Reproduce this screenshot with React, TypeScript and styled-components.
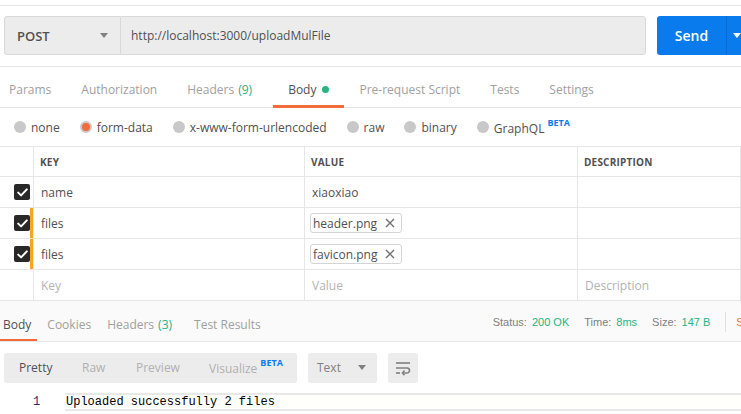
import React from "react";
import styled, { createGlobalStyle } from "styled-components";

const Global = createGlobalStyle`
  html, body { margin: 0; padding: 0; background: #ffffff; }
  body { font-family: "Open Sans", "DejaVu Sans", sans-serif; color: #505050; width: 741px; height: 414px; overflow: hidden; }
  * { box-sizing: border-box; }
`;

const Page = styled.div`
  width: 741px;
  height: 414px;
  overflow: hidden;
  display: flex;
  flex-direction: column;
`;

const TopStrip = styled.div`
  height: 6px;
  border-bottom: 1px solid #e6e6e6;
  flex-shrink: 0;
`;

const UrlRow = styled.div`
  display: flex;
  align-items: stretch;
  padding: 10px 0 11px 4px;
  border-bottom: 1px solid #e6e6e6;
  height: 61px;
  flex-shrink: 0;
`;

const MethodSelect = styled.div`
  width: 116px;
  background: #ececec;
  border: 1px solid #d9d9d9;
  border-right: none;
  border-radius: 3px 0 0 3px;
  display: flex;
  align-items: center;
  justify-content: space-between;
  padding: 0 12px 0 12px;
  font-size: 13px;
  font-weight: 600;
  color: #505050;
`;

const Caret = styled.span<{ $color?: string }>`
  width: 0;
  height: 0;
  border-left: 4px solid transparent;
  border-right: 4px solid transparent;
  border-top: 5px solid ${(p) => p.$color || "#808080"};
`;

const UrlInput = styled.div`
  width: 526px;
  background: #ececec;
  border: 1px solid #d9d9d9;
  border-radius: 0 3px 3px 0;
  display: flex;
  align-items: center;
  padding-left: 10px;
  font-size: 12px;
  color: #505050;
`;

const SendButton = styled.div`
  margin-left: 11px;
  flex: 1;
  display: flex;
  background: #097bed;
  border-radius: 3px 0 0 3px;
  color: #ffffff;
  overflow: hidden;
`;

const SendLabel = styled.div`
  width: 70px;
  display: flex;
  align-items: center;
  justify-content: center;
  font-size: 14px;
  font-weight: 600;
  border-right: 1px solid #0a6bd0;
`;

const SendArrow = styled.div`
  flex: 1;
  display: flex;
  align-items: center;
  padding-left: 6px;
`;

const TabBar = styled.div`
  display: flex;
  height: 41px;
  border-bottom: 1px solid #e6e6e6;
  flex-shrink: 0;
  margin-left: -6px;
`;

const Tab = styled.div<{ $active?: boolean }>`
  position: relative;
  display: flex;
  align-items: center;
  padding: 4px 15px 0;
  font-size: 12px;
  color: ${(p) => (p.$active ? "#505050" : "#a0a0a0")};
  white-space: nowrap;
  &::after {
    content: "";
    position: absolute;
    left: 0;
    right: 0;
    bottom: -1px;
    height: 3px;
    background: ${(p) => (p.$active ? "#f26b3a" : "transparent")};
  }
`;

const Count = styled.span`
  color: #26b47f;
  margin-left: 4px;
  margin-right: 6px;
`;

const Dot = styled.span`
  width: 7px;
  height: 7px;
  border-radius: 50%;
  background: #26b47f;
  margin-left: 6px;
`;

const RadioRow = styled.div`
  display: flex;
  align-items: center;
  height: 39px;
  padding-left: 14px;
  gap: 20px;
  border-bottom: 1px solid #e6e6e6;
  flex-shrink: 0;
`;

const RadioItem = styled.div`
  display: flex;
  align-items: center;
  gap: 5px;
  font-size: 12px;
  color: #505050;
`;

const RadioCircle = styled.span<{ $checked?: boolean }>`
  width: 12px;
  height: 12px;
  border-radius: 50%;
  background: ${(p) => (p.$checked ? "#f26b3a" : "#c8c8c8")};
  border: ${(p) => (p.$checked ? "2px solid #c8c8c8" : "none")};
`;

const Beta = styled.sup`
  font-size: 9px;
  font-weight: 700;
  color: #097bed;
  margin-left: 3px;
  position: relative;
  top: -2px;
`;

const Table = styled.div`
  display: grid;
  grid-template-columns: 34px 271px 273px 1fr;
  flex-shrink: 0;
`;

const Cell = styled.div<{ $head?: boolean; $placeholder?: boolean }>`
  height: ${(p) => (p.$head ? "30px" : "31px")};
  border-bottom: 1px solid #e6e6e6;
  border-right: 1px solid #e6e6e6;
  display: flex;
  align-items: center;
  padding-left: ${(p) => (p.$head ? "6px" : "7px")};
  font-size: ${(p) => (p.$head ? "10px" : "12px")};
  font-weight: ${(p) => (p.$head ? 700 : 400)};
  color: ${(p) => (p.$placeholder ? "#b3b3b3" : "#505050")};
  letter-spacing: ${(p) => (p.$head ? "0.2px" : "0")};
`;

const CheckCell = styled.div<{ $file?: boolean }>`
  height: 31px;
  border-bottom: 1px solid #e6e6e6;
  border-right: 1px solid #e6e6e6;
  display: flex;
  align-items: center;
  padding-left: 14px;
  position: relative;
  &::after {
    content: "";
    display: ${(p) => (p.$file ? "block" : "none")};
    position: absolute;
    right: 0;
    top: 0;
    bottom: 0;
    width: 3px;
    background: #f5a623;
  }
`;

const HeadCheckCell = styled(CheckCell)`
  height: 30px;
`;

const CheckBox = styled.span`
  width: 16px;
  height: 16px;
  border-radius: 2px;
  background: #282828;
  display: flex;
  align-items: center;
  justify-content: center;
`;

const FileChip = styled.div`
  display: flex;
  align-items: center;
  height: 20px;
  border: 1px solid #d4d4d4;
  border-radius: 3px;
  padding: 0 6px 0 2px;
  margin-left: -2px;
  gap: 8px;
  font-size: 12px;
  color: #505050;
  background: #fff;
`;

const ResponseBar = styled.div`
  display: flex;
  align-items: stretch;
  height: 41px;
  background: #fafafa;
  border-bottom: 1px solid #e6e6e6;
  flex-shrink: 0;
  overflow: hidden;
`;

const RespTabs = styled.div`
  display: flex;
  margin-left: -7px;
  flex-shrink: 0;
`;

const RespTab = styled(Tab)`
  padding: 6px 6px 0 10px;
`;

const Meta = styled.div`
  margin-left: auto;
  flex-shrink: 0;
  display: flex;
  align-items: center;
  font-family: "Liberation Sans", Arial, sans-serif;
  font-size: 11px;
  color: #808080;
  margin-right: -73px;
  padding-top: 2px;
`;

const MetaItem = styled.span`
  margin-right: 15px;
`;

const MetaValue = styled.span`
  color: #26b47f;
  margin-left: 5px;
`;

const MetaDivider = styled.span`
  width: 1px;
  height: 20px;
  background: #e0e0e0;
  margin-left: 0;
  margin-right: 10px;
`;

const SaveLink = styled.span`
  color: #f26b3a;
  white-space: nowrap;
`;

const Toolbar = styled.div`
  display: flex;
  align-items: center;
  gap: 11px;
  padding: 10px 0 0 4px;
  height: 41px;
  flex-shrink: 0;
`;

const Segmented = styled.div`
  width: 293px;
  height: 30px;
  background: #ececec;
  border-radius: 3px;
  display: flex;
  align-items: center;
  padding-left: 15px;
`;

const SegItem = styled.span<{ $active?: boolean; $w: number }>`
  width: ${(p) => p.$w}px;
  font-size: 12px;
  color: ${(p) => (p.$active ? "#505050" : "#b0b0b0")};
  white-space: nowrap;
`;

const TypeSelect = styled.div`
  width: 69px;
  height: 30px;
  background: #ececec;
  border-radius: 3px;
  display: flex;
  align-items: center;
  justify-content: space-between;
  padding: 0 11px 0 9px;
  font-size: 12px;
  color: #808080;
`;

const IconButton = styled.div`
  width: 30px;
  height: 30px;
  background: #ececec;
  border-radius: 3px;
  display: flex;
  align-items: center;
  justify-content: center;
`;

const CodeRow = styled.div`
  display: flex;
  margin-top: 10px;
  height: 18px;
`;

const LineNo = styled.div`
  width: 65px;
  padding-left: 33px;
  padding-top: 2px;
  font-family: "Liberation Mono", monospace;
  font-size: 12px;
  color: #1d2a73;
  line-height: 14px;
`;

const CodeBox = styled.div`
  flex: 1;
  border-top: 2px solid #e8e8e8;
  border-bottom: 2px solid #e8e8e8;
  background: #fffffc;
  font-family: "Liberation Mono", monospace;
  font-size: 12px;
  color: #000;
  padding-left: 1px;
  line-height: 14px;
`;

const Check = () => (
  <svg width="11" height="9" viewBox="0 0 11 9">
    <path d="M1.2 4.6 L4.1 7.4 L9.8 1.4" fill="none" stroke="#fff" strokeWidth="2" strokeLinecap="round" strokeLinejoin="round" />
  </svg>
);

const Close = () => (
  <svg width="10" height="10" viewBox="0 0 10 10">
    <path d="M1 1 L9 9 M9 1 L1 9" stroke="#707070" strokeWidth="1.4" />
  </svg>
);

const WrapIcon = () => (
  <svg width="18" height="16" viewBox="0 0 18 16">
    <path d="M2 3 H16" stroke="#808080" strokeWidth="1.6" />
    <path d="M2 8 H13 a2.5 2.5 0 0 1 0 5 H9" fill="none" stroke="#808080" strokeWidth="1.6" />
    <path d="M10.5 10.6 L8.4 13 L10.5 15.2" fill="none" stroke="#808080" strokeWidth="1.5" />
    <path d="M2 13 H6" stroke="#808080" strokeWidth="1.6" />
  </svg>
);

const rows = [
  { key: "name", value: "xiaoxiao", file: false },
  { key: "files", value: "header.png", file: true },
  { key: "files", value: "favicon.png", file: true },
];

const radios = ["none", "form-data", "x-www-form-urlencoded", "raw", "binary"];

export default function App() {
  return (
    <Page>
      <Global />
      <TopStrip />
      <UrlRow>
        <MethodSelect>
          POST
          <Caret />
        </MethodSelect>
        <UrlInput>http://localhost:3000/uploadMulFile</UrlInput>
        <SendButton>
          <SendLabel>Send</SendLabel>
          <SendArrow>
            <Caret $color="#ffffff" />
          </SendArrow>
        </SendButton>
      </UrlRow>
      <TabBar>
        <Tab>Params</Tab>
        <Tab>Authorization</Tab>
        <Tab>
          Headers<Count>(9)</Count>
        </Tab>
        <Tab $active>
          Body<Dot />
        </Tab>
        <Tab>Pre-request Script</Tab>
        <Tab>Tests</Tab>
        <Tab>Settings</Tab>
      </TabBar>
      <RadioRow>
        {radios.map((r) => (
          <RadioItem key={r}>
            <RadioCircle $checked={r === "form-data"} />
            <span>{r}</span>
          </RadioItem>
        ))}
        <RadioItem>
          <RadioCircle />
          <span>
            GraphQL<Beta>BETA</Beta>
          </span>
        </RadioItem>
      </RadioRow>
      <Table>
        <HeadCheckCell />
        <Cell $head>KEY</Cell>
        <Cell $head>VALUE</Cell>
        <Cell $head>DESCRIPTION</Cell>
        {rows.map((r, i) => (
          <React.Fragment key={i}>
            <CheckCell $file={r.file}>
              <CheckBox><Check /></CheckBox>
            </CheckCell>
            <Cell>{r.key}</Cell>
            <Cell>
              {r.file ? (
                <FileChip>
                  {r.value}
                  <Close />
                </FileChip>
              ) : (
                r.value
              )}
            </Cell>
            <Cell />
          </React.Fragment>
        ))}
        <CheckCell />
        <Cell $placeholder>Key</Cell>
        <Cell $placeholder>Value</Cell>
        <Cell $placeholder>Description</Cell>
      </Table>
      <ResponseBar>
        <RespTabs>
          <RespTab $active>Body</RespTab>
          <RespTab>Cookies</RespTab>
          <RespTab>
            Headers<Count>(3)</Count>
          </RespTab>
          <RespTab>Test Results</RespTab>
        </RespTabs>
        <Meta>
          <MetaItem>Status:<MetaValue>200 OK</MetaValue></MetaItem>
          <MetaItem>Time:<MetaValue>8ms</MetaValue></MetaItem>
          <MetaItem>Size:<MetaValue>147 B</MetaValue></MetaItem>
          <MetaDivider />
          <SaveLink>Save Response</SaveLink>
        </Meta>
      </ResponseBar>
      <Toolbar>
        <Segmented>
          <SegItem $active $w={63}>Pretty</SegItem>
          <SegItem $w={54}>Raw</SegItem>
          <SegItem $w={73}>Preview</SegItem>
          <SegItem $w={80}>
            Visualize<Beta>BETA</Beta>
          </SegItem>
        </Segmented>
        <TypeSelect>
          Text
          <Caret />
        </TypeSelect>
        <IconButton>
          <WrapIcon />
        </IconButton>
      </Toolbar>
      <CodeRow>
        <LineNo>1</LineNo>
        <CodeBox>Uploaded successfully 2 files</CodeBox>
      </CodeRow>
    </Page>
  );
}
